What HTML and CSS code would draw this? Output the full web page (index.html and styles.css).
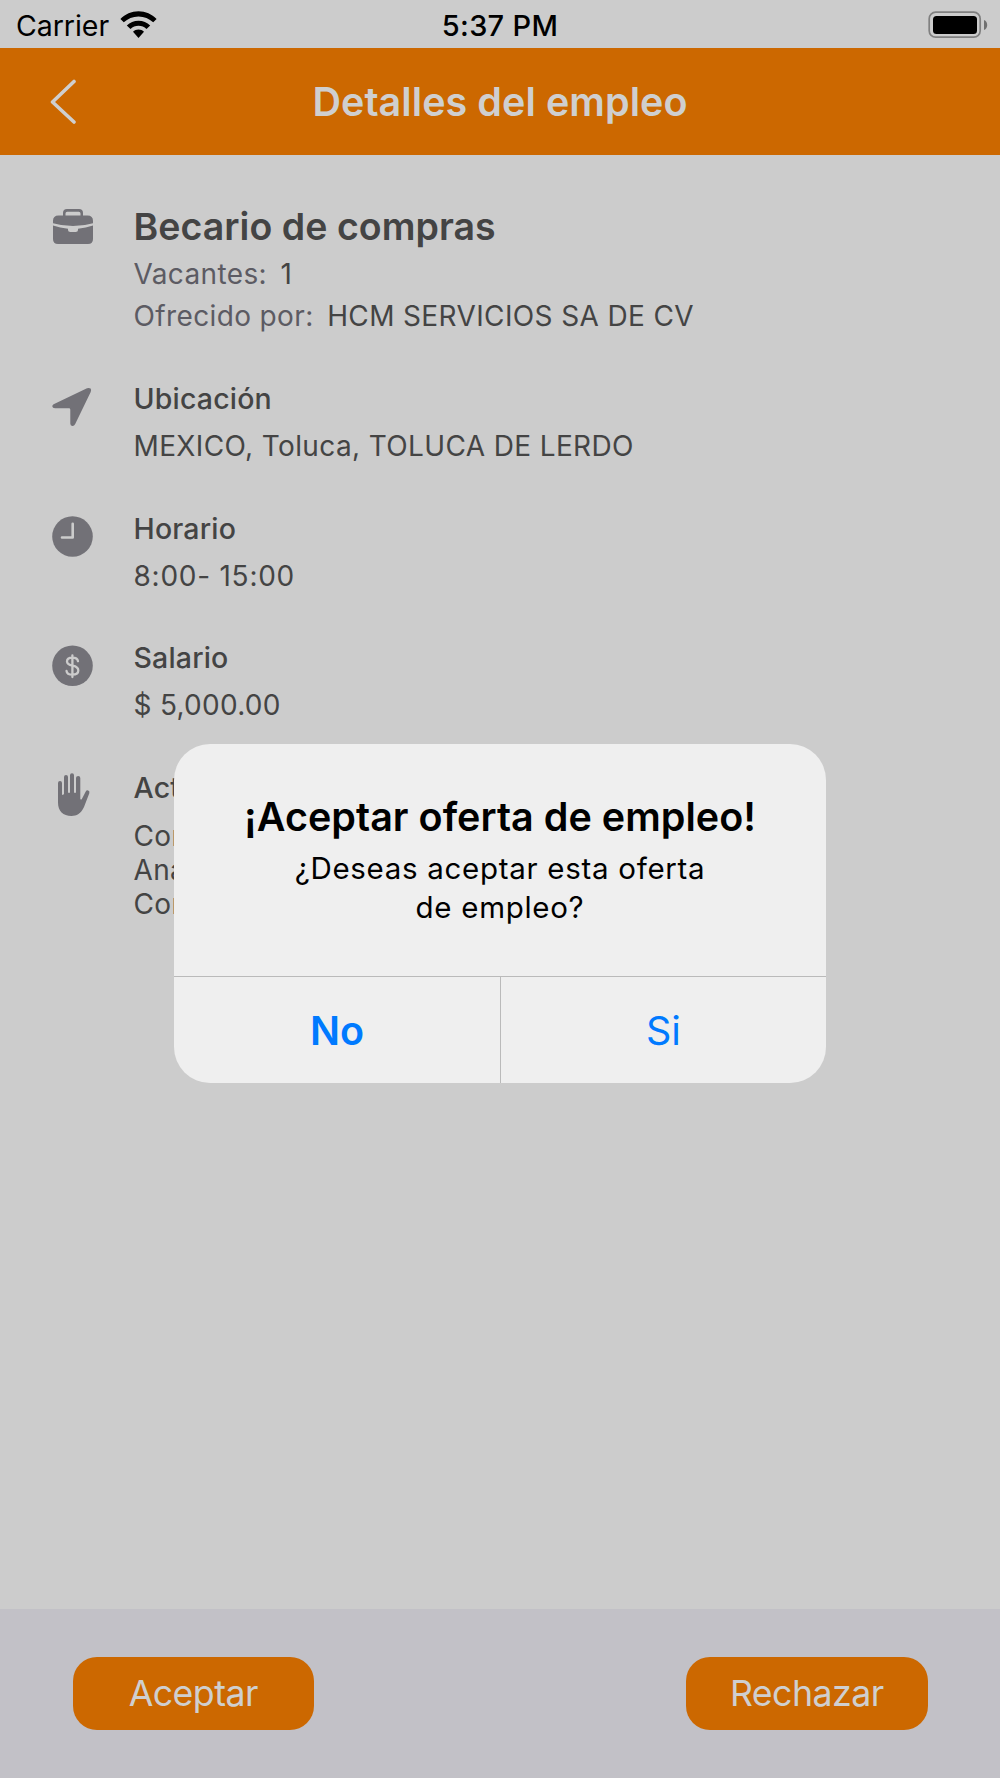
FILE: index.html
```html
<!DOCTYPE html>
<html lang="es">
<head>
<meta charset="utf-8">
<title>Detalles del empleo</title>
<link rel="stylesheet" href="styles.css">
</head>
<body>
<div class="screen">
  <div class="status">
    <div class="status-left">
      <span class="carrier">Carrier</span>
      <svg class="wifi" width="37" height="28" viewBox="0 0 37 28">
        <path d="M18.500 0.300C25.500 0.300 31.900 3.200 36.600 7.900L33.200 11.300C29.300 7.500 24.200 5.400 18.500 5.400S7.700 7.500 3.800 11.300L0.400 7.900C5.100 3.200 11.500 0.300 18.500 0.300Z"/>
        <path d="M18.500 9.700C23 9.700 27.100 11.500 30.200 14.400L26.500 17.900C24.300 15.900 21.600 14.800 18.500 14.800S12.700 15.900 10.500 17.900L6.800 14.400C9.900 11.500 14 9.700 18.500 9.700Z"/>
        <path d="M18.500 18.600C20.600 18.600 22.500 19.400 24 20.700L18.500 27L13 20.700C14.500 19.400 16.400 18.600 18.500 18.600Z"/>
      </svg>
    </div>
    <span class="time">5:37 PM</span>
    <svg class="battery" width="60" height="28" viewBox="0 0 60 28">
      <rect x="1.200" y="1.200" width="51" height="25" rx="6.500" fill="none" stroke="#808080" stroke-width="1.700"/>
      <rect x="5" y="5" width="44" height="18" rx="3.500"/>
      <path d="M56 9C60.300 10.300 60.300 17.700 56 19Z" fill="#707070"/>
    </svg>
  </div>

  <header class="navbar">
    <svg class="back" width="28" height="46" viewBox="0 0 28 46">
      <path d="M25 2.500L3.500 23L25 43" fill="none" stroke="#cfcfcf" stroke-width="3.600" stroke-linecap="round" stroke-linejoin="round"/>
    </svg>
    <h1 class="nav-title">Detalles del empleo</h1>
  </header>

  <main class="details">
    <section class="item item-job">
      <svg class="icon" width="42" height="46" viewBox="0 0 42 46">
        <path fill-rule="evenodd" d="M11 10.500V8Q11 4 15 4H27Q31 4 31 8V10.500H35.500Q41 10.500 41 16V18.200Q21 24 1 18.200V16Q1 10.500 6.500 10.500ZM13.500 10.500H28.500V8.500Q28.500 6.800 26.800 6.800H15.200Q13.500 6.800 13.500 8.500Z"/>
        <path d="M1 20.500Q8 22.800 16 23.800V24.500Q16 27 18.500 27H23.500Q26 27 26 24.500V23.800Q34 22.800 41 20.500V34Q41 39 36 39H6Q1 39 1 34Z"/>
      </svg>
      <div class="text">
        <h2 class="job">Becario de compras</h2>
        <p class="fact"><span class="label">Vacantes:</span><span class="one">1</span></p>
        <p class="fact"><span class="label by">Ofrecido por:</span><span class="company">HCM SERVICIOS SA DE CV</span></p>
      </div>
    </section>
    <section class="item">
      <svg class="icon" width="42" height="46" viewBox="0 0 42 46">
        <path d="M1.600 20.300L35 4.300Q37 3.400 38.600 4.500Q39.600 6 38.700 7.900L23.200 40.100Q22.200 42.300 20.200 42.100Q18.300 41.800 18.300 39.500V25.700Q18.300 24.300 17 24.300H3Q0.500 24.300 0.300 22.500Q0.200 21 1.600 20.300Z"/>
      </svg>
      <div class="text">
        <h3 class="heading">Ubicación</h3>
        <p class="value">MEXICO, Toluca, TOLUCA DE LERDO</p>
      </div>
    </section>
    <section class="item">
      <svg class="icon" width="42" height="46" viewBox="0 0 42 46">
        <circle cx="20.500" cy="22.500" r="20.300"/>
        <path d="M20.700 9.700V23.500H10" fill="none" stroke="#cccccc" stroke-width="2.600" stroke-linecap="round" stroke-linejoin="round"/>
      </svg>
      <div class="text">
        <h3 class="heading">Horario</h3>
        <p class="value hours">8:00- 15:00</p>
      </div>
    </section>
    <section class="item">
      <svg class="icon" width="42" height="46" viewBox="0 0 42 46">
        <circle cx="20.500" cy="22.800" r="20.300"/>
        <path d="M20.400 12.500V34M26 18.200C25.600 15.900 23.400 14.700 20.400 14.700C17.200 14.700 15 16.100 15 18.500C15 20.800 16.700 21.900 20.600 22.700C24.600 23.500 26.300 24.900 26.300 27.500C26.300 30.100 24 31.700 20.400 31.700C17.100 31.700 14.800 30.300 14.500 27.800" fill="none" stroke="#cccccc" stroke-width="2.300" stroke-linecap="round"/>
      </svg>
      <div class="text">
        <h3 class="heading">Salario</h3>
        <p class="value amount">$ 5,000.00</p>
      </div>
    </section>
    <section class="item">
      <svg class="icon" width="42" height="46" viewBox="0 0 42 46">
        <path d="M6 10Q6 7.900 8 7.900Q10 7.900 10 10V22.100L12 21.300V4Q12 1.900 14 1.900Q16 1.900 16 4V19.800H18V2.300Q18 0.200 20 0.200Q22 0.200 22 2.300V19.800H24V5Q24 2.900 26.200 2.900Q28.300 2.900 28.300 5V26Q29 27.300 30 25.700L33.600 18.800Q34.600 16.900 36.200 17.500Q38 18.300 37.300 20.300L32 34.100C29 41 24.500 43 19.500 43C11 43 6 38 6 29.500Z"/>
      </svg>
      <div class="text">
        <h3 class="heading">Act</h3>
        <p class="value tasks">Con<br>Ana<br>Con</p>
      </div>
    </section>
  </main>

  <footer class="actions">
    <button class="action">Aceptar</button>
    <button class="action">Rechazar</button>
  </footer>

  <div class="overlay">
    <div class="alert" role="alertdialog">
      <div class="alert-body">
        <h2 class="alert-title">¡Aceptar oferta de empleo!</h2>
        <p class="alert-text">¿Deseas aceptar esta oferta<br>de empleo?</p>
      </div>
      <div class="alert-buttons">
        <button class="choice no">No</button>
        <button class="choice yes">Si</button>
      </div>
    </div>
  </div>
</div>
</body>
</html>
```
FILE: styles.css
```css
* { box-sizing: border-box; }
body { margin: 0; font-family: Inter, "Liberation Sans", sans-serif; color: #444; }
h1, h2, h3, p { margin: 0; white-space: nowrap; }
button { border: 0; padding: 0; font-family: inherit; }
svg { display: block; }

.screen { position: relative; width: 1000px; height: 1778px; display: flex; flex-direction: column; background: #cccccc; overflow: hidden; }

.status { height: 48px; display: grid; grid-template-columns: 1fr auto 1fr; align-items: center; padding: 3px 12px 0; color: #000; font-size: 28.500px; line-height: 45px; }
.status-left { display: flex; align-items: center; gap: 11px; padding-left: 4px; }
.carrier { letter-spacing: -0.050px; }
.wifi { margin-top: -2px; }
.time { font-weight: 500; font-size: 29px; letter-spacing: 0.300px; }
.battery { justify-self: end; margin-top: -2px; }

.navbar { height: 107px; display: grid; grid-template-columns: 100px 1fr 100px; align-items: center; background: #cc6800; }
.back { margin-left: 49px; }
.nav-title { text-align: center; color: #cfcfcf; font-size: 39.500px; line-height: 48px; font-weight: 600; letter-spacing: 0.060px; }

.details { flex: 1; padding: 47px 0 0 52px; }
.item { display: grid; grid-template-columns: 81.500px 1fr; align-items: start; height: 129.660px; }
.item-job { height: 177px; }
.icon { fill: #727177; margin-top: 5px; }
.item-job .icon { margin-top: 3px; }
.job { font-size: 37.500px; line-height: 50px; font-weight: 600; letter-spacing: 0.040px; }
.fact { display: flex; gap: 13.500px; font-size: 28px; line-height: 41.500px; letter-spacing: 0.370px; }
.job + .fact { margin-top: 2px; }
.label { color: #5c5b63; }
.heading { font-size: 28.500px; line-height: 40px; font-weight: 500; letter-spacing: 0.180px; }
.value { font-size: 28px; line-height: 34px; margin-top: 10px; letter-spacing: 0.370px; }
.hours { letter-spacing: 0.750px; }
.amount { letter-spacing: 0.270px; }
.tasks { line-height: 34.200px; margin-top: 11px; }

.actions { height: 169px; display: flex; justify-content: space-between; align-items: flex-start; padding: 48px 72.500px 0; background: #c2c1c7; }
.action { width: 241.500px; height: 72.500px; border-radius: 24px; background: #cc6800; color: #cfcfcf; font-size: 35.700px; letter-spacing: -0.550px; }

.overlay { position: absolute; inset: 0; padding-top: 744px; display: flex; justify-content: center; align-items: flex-start; }
.alert { width: 652px; height: 339px; border-radius: 36px; background: #efefef; color: #000; overflow: hidden; display: flex; flex-direction: column; }
.alert-body { flex: 1; padding-top: 49px; text-align: center; }
.alert-title { font-size: 39.500px; line-height: 48px; font-weight: 600; letter-spacing: 0.030px; }
.alert-text { font-size: 29.500px; line-height: 39px; margin-top: 8px; letter-spacing: 0.700px; }
.alert-buttons { height: 107px; display: grid; grid-template-columns: 327px 1fr; border-top: 1px solid #bababa; }
.choice { background: none; color: #007aff; font-size: 39.500px; padding-top: 2px; }
.no { font-weight: 600; border-right: 1px solid #bababa; }
```
